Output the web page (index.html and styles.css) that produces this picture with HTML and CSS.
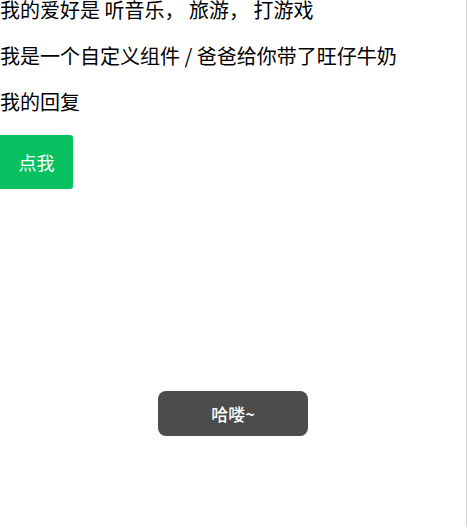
FILE: index.html
```html
<!DOCTYPE html>
<html lang="zh-CN">
<head>
    <meta charset="UTF-8">
    <meta name="viewport" content="width=device-width, initial-scale=1.0">
    <title>自定义组件</title>
    <link rel="stylesheet" href="styles.css">
</head>
<body>

<div class="page">
  <p class="line">我的爱好是 听音乐， 旅游， 打游戏</p>
  <p class="line">我是一个自定义组件 / 爸爸给你带了旺仔牛奶</p>
  <p class="line">我的回复</p>
  <button class="btn">点我</button>
</div>

<div class="toast">哈喽~</div>

</body>
</html>
```

FILE: styles.css
```css
html, body {
  margin: 0;
  height: 100%;
}

body {
  font-family: "Noto Sans CJK SC", "Liberation Sans", sans-serif;
  color: #000;
  background-color: #fff;
}

.page {
  width: 467px;
  height: 100%;
  box-sizing: border-box;
  border-right: 1px solid #d4d4d4;
}

.line {
  font-size: 20px;
  line-height: 26px;
  margin: 0 0 20px 0;
}

.line:first-child {
  margin-top: -3px;
}

.btn {
  display: block;
  width: 73px;
  height: 54px;
  margin-top: 0;
  padding: 0;
  border: none;
  border-radius: 0 3px 3px 0;
  background-color: #07c160;
  color: #fff;
  font-family: inherit;
  font-size: 18px;
}

.toast {
  position: fixed;
  left: 158px;
  top: 391px;
  width: 150px;
  height: 45px;
  line-height: 45px;
  border-radius: 8px;
  background-color: #4c4c4c;
  color: #fff;
  text-align: center;
  font-size: 17px;
  font-weight: 500;
}
```
